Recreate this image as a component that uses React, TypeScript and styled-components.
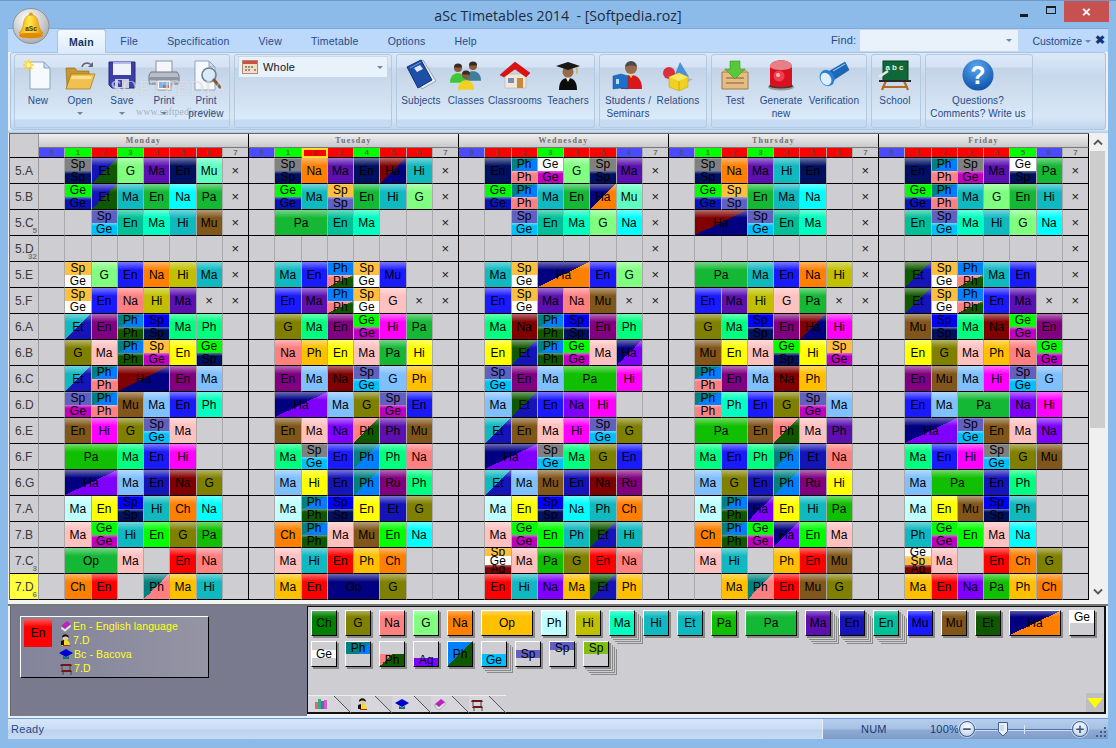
import React from 'react'
import styled, { createGlobalStyle } from 'styled-components'

const COLORS: Record<string, string> = {
  gy: '#808080', nv: '#001060', na: '#000080', dg: '#105800', bl: '#1414b8', b2: '#1a1aff', b3: '#0000ff',
  lg: '#80ff80', pu: '#5c10b0', mi: '#60ffc0', gr: '#00ff00', gb: '#0814b8', te: '#10b8c0', gn: '#14b834',
  cy: '#00ffff', sp: '#6060c0', sk: '#00c0ff', em: '#00c098', aq: '#00ffc0', br: '#80561a', or: '#ff8000',
  ol: '#c0c000', wh: '#ffffff', ye: '#ffc040', am: '#ffc000', pk: '#ff8080', lp: '#ffc0c0', ph: '#0080ff',
  tl: '#008080', mg: '#c000c0', pr: '#800080', ma: '#ff00ff', sg: '#00ff80', ms: '#10c000', re: '#ff0000',
  mr: '#800000', lb: '#80c0ff', oa: '#808000', ib: '#c0ffff', yl: '#ffff00', vi: '#8000ff', ch: '#008000',
  lm: '#80c010',
}

const DAYS = ['Monday', 'Tuesday', 'Wednesday', 'Thursday', 'Friday']

// b = blue, g = green, r = red, s = selected, n = grey
const PERIODS = ['bgrgrrrn', 'bgsrgrrn', 'brrgrrbn', 'bgrgrrrn', 'brrrrgbn']

// one string per day: 8 periods, "." empty, "x" closed, a/b split, c-d diagonal, *n span
const ROWS: { name: string; badge?: string; mark?: boolean; days: string[] }[] = [
  { name: '5.A', days: [
    '. Sp:gy/Sp:nv Et:bl-dg G:lg Ma:pu En:nv Mu:mi x',
    '. Sp:gy/Sp:nv Na:or Ma:pu En:nv Ha:mr-na Hi:te x',
    '. En:nv Ph:tl-ph/Ph:pk Ge:wh/Ge:mg G:lg Sp:gy/Sp:nv Ma:pu x',
    '. Sp:gy/Sp:nv Na:or Ma:pu Hi:te En:nv . x',
    '. En:nv Ph:tl-ph/Ph:pk Sp:gy/Ge:mg Ma:pu Ge:wh/Sp:nv Pa:gn x',
  ] },
  { name: '5.B', days: [
    '. Ge:gr/Ge:gb Et:bl-dg Ma:te En:gn Na:cy Pa:gn x',
    '. Ge:gr/Ge:gb Ma:te Sp:ye/Sp:sp En:gn Hi:te G:lg x',
    '. Ge:gr/Ge:gb Ph:tl-ph/Ph:pk Ma:te En:gn Ha:na-or Mu:mi x',
    '. Ge:gr/Ge:gb Sp:ye/Sp:sp En:gn Ma:te Na:cy . x',
    '. Ge:gr/Ge:gb Ph:tl-ph/Ph:pk Ma:te G:lg En:gn Hi:te x',
  ] },
  { name: '5.C', badge: '5', days: [
    '. . Sp:sp/Ge:sk En:em Ma:aq Hi:te Mu:br x',
    '. Pa:gn*2 En:em Ma:aq . . x',
    '. . Sp:sp/Ge:sk En:em Ma:aq G:lg Na:cy x',
    '. Ha:mr-na*2 Sp:sp/Ge:sk En:em Ma:aq . x',
    '. En:em Sp:sp/Ge:sk Ma:aq Hi:te G:lg Na:cy x',
  ] },
  { name: '5.D', badge: '32', days: [
    '. . . . . . . x', '. . . . . . . x', '. . . . . . . x', '. . . . . . . x', '. . . . . . . x',
  ] },
  { name: '5.E', days: [
    '. Sp:ye/Ge:wh G:lg En:b2 Na:or Hi:ol Ma:te x',
    '. Ma:te En:b2 Ph:ph/Ph:pk-dg Sp:ye/Ge:wh Mu:b2 . x',
    '. Ma:te Sp:ye/Ge:wh Ha:na-or*2 En:b2 G:lg x',
    '. Pa:gn*2 Ma:te En:b2 Na:or Hi:ol x',
    '. Et:dg-bl Sp:ye/Ge:wh Ph:ph/Ph:pk-dg Ma:te En:b2 . x',
  ] },
  { name: '5.F', days: [
    '. Sp:ye/Ge:wh En:b2 Na:pk Hi:ol Ma:pu x x',
    '. En:b2 Ma:pu Ph:ph/Ph:pk-dg Sp:ye/Ge:wh G:lp x x',
    '. En:b2 Sp:ye/Ge:wh Ma:pu Na:pk Mu:br x x',
    '. En:b2 Ma:pu Hi:ol G:lp Pa:gn x x',
    '. Et:dg-bl Sp:ye/Ge:wh Ph:ph/Ph:pk-dg En:b2 Ma:pu x x',
  ] },
  { name: '6.A', days: [
    '. Et:te-bl En:pr Ph:tl-ph/Ph:dg Sp:b3/Sp:nv Ma:sg Ph:sg .',
    '. G:oa Ma:sg En:pr Ge:gr/Ge:mg Hi:ma Pa:gn .',
    '. Ma:sg Na:mr Ph:tl-ph/Ph:dg Sp:b3/Sp:nv En:pr Ph:sg .',
    '. G:oa Ma:sg Sp:b3/Sp:nv En:pr Ha:mr-na Hi:ma .',
    '. Mu:br Sp:b3/Sp:nv Ma:sg Na:mr Ge:gr/Ge:mg En:pr .',
  ] },
  { name: '6.B', days: [
    '. G:oa Ma:lp Ph:tl-ph/Ph:dg Sp:ye/Ge:mg En:yl Ge:gr/Sp:nv .',
    '. Na:pk Ph:am En:yl Ma:lp Pa:gn Hi:yl .',
    '. En:yl Et:dg-bl Ph:tl-ph/Ph:dg Ge:gr/Ge:mg Ma:lp Ha:na-vi .',
    '. Mu:br En:yl Ma:lp Ge:gr/Sp:nv Hi:yl Sp:ye/Ge:mg .',
    '. En:yl G:oa Ma:lp Ph:am Na:pk Ge:gr/Ge:mg .',
  ] },
  { name: '6.C', days: [
    '. Et:te-bl Ph:tl-ph/Ph:pk Ha:mr-na*2 En:pr Ma:lb .',
    '. En:pr Ma:lb Na:mr Sp:sp/Ge:sk G:lb Ph:am .',
    '. Sp:sp/Ge:sk En:pr Ma:lb Pa:ms*2 Hi:ma .',
    '. Ph:tl-ph/Ph:pk En:pr Ma:lb Na:mr Ph:am . .',
    '. En:pr Mu:br Ma:lb Hi:ma Sp:sp/Ge:sk G:lb .',
  ] },
  { name: '6.D', days: [
    '. Sp:sp/Ge:mg Ph:tl-ph/Ph:pk Mu:br Ma:lb En:b2 Ph:aq .',
    '. Ha:na-vi*2 Ma:lb G:oa Sp:sp/Ge:mg En:b2 .',
    '. Ma:lb Et:dg-bl En:b2 Na:vi Hi:ma . .',
    '. Ph:tl-ph/Ph:pk Ph:aq En:b2 G:oa Sp:sp/Ge:mg Ma:lb .',
    '. En:b2 Ma:lb Pa:gn*2 Na:vi Hi:ma .',
  ] },
  { name: '6.E', days: [
    '. En:br Hi:ma G:oa Sp:sp/Ge:sk Ma:lp . .',
    '. En:br Ma:lp Na:vi Ph:pk-dg Ph:pu Mu:br .',
    '. Et:te-bl En:br Ma:lp Hi:ma Sp:sp/Ge:sk G:oa .',
    '. Pa:ms*2 En:br Ph:pk-dg Ma:lp Ph:pu .',
    '. Ha:na-vi*2 Sp:sp/Ge:sk En:br Ma:lp Na:vi .',
  ] },
  { name: '6.F', days: [
    '. Pa:ms*2 Ma:sg En:b2 Hi:ma . .',
    '. Ma:sg Sp:gy/Ge:sk En:b2 Ph:tl-ph Ph:sg Na:pk .',
    '. Ha:na-vi*2 Sp:gy/Ge:sk Ma:sg G:oa En:b2 .',
    '. Ma:sg En:b2 Ph:sg Ph:tl-ph Et:bl Na:pk .',
    '. Ma:sg En:b2 Hi:ma Sp:gy/Ge:sk G:oa Mu:br .',
  ] },
  { name: '6.G', days: [
    '. Ha:na-vi*2 Ma:lb En:bl Na:mr G:oa .',
    '. Ma:lb Hi:yl En:bl Ph:tl-ph Ru:pr Ph:sg .',
    '. Et:te-bl Ma:lb Mu:br En:bl Na:mr Ru:pr .',
    '. Ma:lb G:oa En:bl Ph:tl-ph Ru:pr Hi:yl .',
    '. Ma:lb Pa:ms*2 En:bl Ph:sg . .',
  ] },
  { name: '7.A', days: [
    '. Ma:ib En:yl Sp:b3/Sp:nv Hi:te Ch:or Na:cy .',
    '. Ma:ib Ph:tl-ph/Ph:dg Sp:b3/Sp:nv En:yl Et:bl G:oa .',
    '. Ma:ib En:yl Sp:b3/Sp:nv Na:cy Ph:te Ch:or .',
    '. Ma:ib Ph:tl-ph/Ph:dg Ha:na-vi En:yl Hi:te Pa:ms .',
    '. Ma:ib En:yl Mu:br Sp:b3/Sp:nv Ph:te . .',
  ] },
  { name: '7.B', days: [
    '. Ma:lp Ge:gr/Ge:mg Hi:te En:gr G:oa Pa:ms .',
    '. Ch:or Ph:tl-ph/Ph:dg Ma:lp Mu:br En:gr Na:cy .',
    '. Ma:lp Ge:gr/Ge:mg En:gr Ph:te Et:dg-bl Hi:te .',
    '. Ch:or Ph:tl-ph/Ph:dg Ge:gr/Ge:mg Ha:na-vi En:gr Ma:lp .',
    '. Ph:te Ge:gr/Ge:mg En:gr Ma:lp Na:cy . .',
  ] },
  { name: '7.C', badge: '3', days: [
    '. Op:gn*2 Ma:lp . En:re Na:pk .',
    '. Ma:lp Hi:te En:re Ph:am Ch:or . .',
    '. Sp:ye/Ge:wh/Ag:mr Ma:lp Pa:ms G:oa En:re Na:pk .',
    '. Ma:lp Hi:te . Ph:am En:re Mu:br .',
    '. Ge:wh/Sp:ye/Ag:mr Ma:lp . En:re Ch:or G:oa .',
  ] },
  { name: '7.D', badge: '6', mark: true, days: [
    '. Ch:or En:re . Ph:tl-pk Ma:am Hi:te .',
    '. Ma:am En:re Op:na*2 G:oa . .',
    '. En:re Hi:te Na:vi Ma:am Et:dg-bl Ph:am .',
    '. . Ma:am Ph:tl-pk En:re Mu:br G:oa .',
    '. Ma:am En:re Na:vi Pa:ms Ph:am Ch:or .',
  ] },
]

const swatch = (a: string, b?: string) => {
  const first = COLORS[a]
  return b ? `linear-gradient(to bottom right, ${first} 50%, ${COLORS[b]} 50%)` : first
}

const splitBand = (color: string, from: number, to: number) =>
  `linear-gradient(#cecdd1 ${from}%, ${color} ${from}%, ${color} ${to}%, #cecdd1 ${to}%)`

// the tray below the timetable
const CARDS: { label: string; bg: string; wide?: boolean; stack?: number; align?: string; flat?: boolean }[] = [
  { label: 'Ch', bg: swatch('ch') },
  { label: 'G', bg: swatch('oa') },
  { label: 'Na', bg: swatch('pk') },
  { label: 'G', bg: swatch('lg') },
  { label: 'Na', bg: swatch('or') },
  { label: 'Op', bg: swatch('am'), wide: true },
  { label: 'Ph', bg: swatch('ib') },
  { label: 'Hi', bg: swatch('ol') },
  { label: 'Ma', bg: swatch('aq'), stack: 3 },
  { label: 'Hi', bg: swatch('te') },
  { label: 'Et', bg: swatch('te') },
  { label: 'Pa', bg: swatch('ms') },
  { label: 'Pa', bg: swatch('gn'), wide: true },
  { label: 'Ma', bg: swatch('pu'), stack: 3 },
  { label: 'En', bg: swatch('bl'), stack: 3 },
  { label: 'En', bg: swatch('em'), stack: 3 },
  { label: 'Mu', bg: swatch('b2') },
  { label: 'Mu', bg: swatch('br') },
  { label: 'Et', bg: swatch('dg') },
  { label: 'Ha', bg: swatch('na', 'or'), wide: true },
  { label: 'Ge', bg: splitBand('#ffffff', 0, 50), align: 'flex-start', flat: true },
  { label: 'Ge', bg: splitBand('#ffffff', 33, 66), flat: true },
  { label: 'Ph', bg: `linear-gradient(#0000 50%, #cecdd1 50%), ${swatch('tl', 'ph')}`, align: 'flex-start', flat: true },
  { label: 'Ph', bg: `linear-gradient(#cecdd1 50%, #0000 50%), ${swatch('pk', 'dg')}`, align: 'flex-end', flat: true },
  { label: 'Ag', bg: splitBand('#8000ff', 66, 100), align: 'flex-end', flat: true },
  { label: 'Ph', bg: swatch('ph', 'dg'), flat: true },
  { label: 'Ge', bg: splitBand('#00c0ff', 50, 100), align: 'flex-end', stack: 2, flat: true },
  { label: 'Sp', bg: splitBand('#6060c0', 33, 66), flat: true },
  { label: 'Sp', bg: splitBand('#6060c0', 0, 33), align: 'flex-start', flat: true },
  { label: 'Sp', bg: splitBand('#80c010', 0, 50), align: 'flex-start', stack: 3, flat: true },
]

const GlobalStyle = createGlobalStyle`
  html, body { margin: 0; padding: 0; background: #8dbbe9; }
  body { font-family: "Liberation Sans", Arial, sans-serif; overflow: hidden; }
  * { box-sizing: border-box; }
`

const Win = styled.div`
  width: 1116px;
  height: 748px;
  display: flex;
  flex-direction: column;
  overflow: hidden;
  position: relative;
  background: #8dbbe9;
  border-top: 1px solid #6d97c4;
`
const TitleBar = styled.div`
  height: 27px;
  display: grid;
  grid-template-columns: 1fr auto 1fr;
  align-items: center;
`
const Title = styled.div`
  grid-column: 2;
  font-family: "Open Sans", sans-serif;
  font-size: 14.2px;
  color: #1c2c3c;
  white-space: pre;
  padding-top: 1px;
`
const Controls = styled.div`
  grid-column: 3;
  justify-self: end;
  display: flex;
  align-items: center;
  height: 27px;
  padding: 0 7px 6px 0;
`
const CtlMin = styled.div`
  width: 8px;
  height: 3px;
  background: #1c1c1c;
  margin: 8px 18px 0 0;
`
const CtlMax = styled.div`
  width: 10px;
  height: 8px;
  border: 1px solid #1c1c1c;
  border-top-width: 2px;
  margin: 0 8px 4px 0;
`
const CtlClose = styled.div`
  width: 45px;
  height: 21px;
  background: #c75050;
  color: #fff;
  display: flex;
  align-items: center;
  justify-content: center;
  font-size: 15px;
  font-weight: bold;
`
const Logo = styled.div`
  position: absolute;
  left: 12px;
  top: 7px;
  width: 38px;
  height: 36px;
  z-index: 3;
`
const Client = styled.div`
  flex: 1;
  margin: 0 8px 9px;
  display: flex;
  flex-direction: column;
  background: #f0f0f0;
`
const TabBar = styled.div`
  height: 24px;
  display: flex;
  background: #bcd8fb;
  padding-left: 49px;
  border-top: 1px solid #7da8d8;
  position: relative;
  z-index: 1;
`
const Tab = styled.div<{ $active?: boolean }>`
  height: ${(p) => (p.$active ? '24px' : '23px')};
  padding: 0 ${(p) => (p.$active ? '11px' : '14.5px')};
  display: flex;
  align-items: center;
  font-size: 10.5px;
  letter-spacing: 0.22px;
  font-weight: ${(p) => (p.$active ? 'bold' : 'normal')};
  color: ${(p) => (p.$active ? '#15335f' : '#274a87')};
  ${(p) =>
    p.$active &&
    `background: linear-gradient(#f4f9ff, #dcebfb);
     border: 1px solid #a5c4e6;
     border-bottom: none;
     border-radius: 3px 3px 0 0;`}
`
const FindBox = styled.div`
  margin-left: auto;
  display: flex;
  align-items: flex-start;
  padding-right: 3px;
`
const FindLabel = styled.div`
  font-size: 11px;
  letter-spacing: 0.2px;
  color: #274a87;
  margin: 5px 3px 0 0;
`
const FindInput = styled.div`
  width: 160px;
  height: 23px;
  background: #e9f1fb;
  border: 1px solid #c6d8ec;
  display: flex;
  align-items: center;
  justify-content: flex-end;
  padding-right: 6px;
`
const Caret = styled.span`
  display: inline-block;
  width: 0;
  height: 0;
  border-left: 3px solid transparent;
  border-right: 3px solid transparent;
  border-top: 3px solid #6c87a8;
`
const SinkMark = styled.span`
  display: inline-block;
  width: 0;
  height: 0;
  border-left: 8px solid transparent;
  border-right: 8px solid transparent;
  border-top: 10px solid #ffff00;
`
const Customize = styled.div`
  font-size: 10.5px;
  color: #274a87;
  margin: 6px 0 0 13px;
  display: flex;
  align-items: center;
  gap: 3px;
`
const CloseX = styled.div`
  font-size: 12px;
  font-weight: bold;
  color: #15337a;
  margin: 2px 0 0 4px;
  line-height: 18px;
`
const Ribbon = styled.div`
  height: 78px;
  margin: 0 2px;
  display: flex;
  gap: 4px;
  padding: 2px 3px;
  background: linear-gradient(#dbe8f8, #c7d8ec 24px, #d8e7f7 64px, #bfd5ee);
  border-radius: 3px;
  border: 1px solid #a9c3e0;
  position: relative;
`
const Group = styled.div<{ $w: number; $pad?: number }>`
  width: ${(p) => p.$w}px;
  height: 74px;
  margin-top: -1px;
  padding-left: ${(p) => p.$pad ?? 0}px;
  display: flex;
  align-items: flex-start;
  border: 1px solid #b3c9e0;
  border-radius: 3px;
  background: linear-gradient(#dde9f8 0, #d4e2f3 12px, #c3d3e7 13px, #d0dff0 40px, #dcebfa 64px, #c5dbf3 65px);
`
const RibbonBtn = styled.div<{ $w: number }>`
  width: ${(p) => p.$w}px;
  flex: none;
  display: flex;
  flex-direction: column;
  align-items: center;
  padding-top: 4px;
  color: #274a87;
`
const IconBox = styled.div`
  height: 32px;
  display: flex;
  align-items: center;
  justify-content: center;
  margin-bottom: 3px;
`
const BtnLabel = styled.div`
  font-size: 10px;
  letter-spacing: 0.12px;
  line-height: 13px;
  text-align: center;
  white-space: nowrap;
  min-height: 13px;
  display: flex;
  align-items: center;
  justify-content: center;
`
const WholeSelect = styled.div`
  width: 150px;
  height: 22px;
  margin: 1px 0 0 3px;
  background: #e9f1fb;
  border: 1px solid #c6d8ec;
  display: flex;
  align-items: center;
  padding: 0 4px 0 3px;
  gap: 5px;
  font-size: 11px;
  letter-spacing: 0.2px;
  color: #111;
`
const Grow = styled.div`
  flex: 1;
`
const Watermark = styled.div`
  position: absolute;
  left: 90px;
  top: 24px;
  pointer-events: none;
  color: rgba(255, 255, 255, 0.55);
  font-family: "Liberation Serif", serif;
  text-align: center;
  width: 136px;
`
const WmBig = styled.div`
  font-size: 21px;
  letter-spacing: 0.5px;
  line-height: 22px;
  text-shadow: 0 0 1px rgba(120, 130, 150, 0.4);
`
const WmSmall = styled.div`
  font-size: 10px;
  line-height: 14px;
  margin-top: 6px;
  padding-left: 14px;
  color: rgba(90, 100, 120, 0.45);
`
const Strip = styled.div`
  height: 3px;
  background: linear-gradient(#d6e5f6, #afc8e6);
`
const MainRow = styled.div`
  display: flex;
  padding-left: 1px;
  height: 467px;
`
const Timetable = styled.div`
  width: 1080px;
  height: 467px;
  display: grid;
  grid-template-columns: 29px repeat(40, 26.25px);
  grid-template-rows: 14px 10px repeat(17, 26px);
  background: #cecdd1;
  border-top: 1px solid #666;
  border-left: 1px solid #666;
`
const Corner = styled.div`
  grid-row: span 2;
  border-right: 1px solid #999;
  border-bottom: 1px solid #000;
`
const DayHead = styled.div`
  grid-column: span 8;
  display: flex;
  align-items: center;
  justify-content: center;
  background: linear-gradient(#efefef, #c9c9cc);
  border-right: 1px solid #000;
  border-bottom: 1px solid #777;
  font-family: "Liberation Serif", serif;
  font-size: 8px;
  font-weight: bold;
  letter-spacing: 1.2px;
  color: #707070;
`
const CHIP: Record<string, string> = { b: '#4a4aff', g: '#00ff00', r: '#ff0000', s: '#ff0000', n: '#cecdd1' }
const Chip = styled.div<{ $kind: string; $end: boolean }>`
  background: ${(p) => CHIP[p.$kind]};
  border-right: 1px solid ${(p) => (p.$end ? '#000' : '#aaa')};
  border-bottom: 1px solid #000;
  ${(p) => p.$kind === 's' && 'outline: 2px solid #ffe020; outline-offset: -2px;'}
  font-size: 8px;
  font-weight: bold;
  line-height: 9px;
  text-align: center;
  color: rgba(70, 80, 70, 0.75);
`
const ClassCell = styled.div<{ $mark?: boolean }>`
  position: relative;
  background: ${(p) => (p.$mark ? '#ffff40' : 'transparent')};
  border-right: 1px solid #999;
  border-bottom: 1px solid #000;
  display: flex;
  align-items: center;
  padding-left: 5px;
  font-size: 12px;
  color: #3a3a3a;
`
const Badge = styled.span`
  position: absolute;
  right: 1px;
  bottom: 0;
  font-size: 8px;
  font-weight: bold;
  line-height: 9px;
  color: #777;
`
const Cell = styled.div<{ $span: number; $end: boolean }>`
  grid-column: span ${(p) => p.$span};
  border-right: 1px solid ${(p) => (p.$end ? '#000' : '#aaa')};
  border-bottom: 1px solid #000;
  display: flex;
  flex-direction: column;
  min-width: 0;
  min-height: 0;
`
const Part = styled.div<{ $bg: string; $glow: number }>`
  flex: 1;
  min-height: 0;
  display: flex;
  align-items: center;
  justify-content: center;
  line-height: 1;
  font-size: 12px;
  color: #000;
  background: linear-gradient(rgba(255, 255, 255, 0.42), rgba(255, 255, 255, 0) ${(p) => p.$glow}px), ${(p) => p.$bg};
`
const Cross = styled.div`
  flex: 1;
  display: flex;
  align-items: center;
  justify-content: center;
  font-size: 13px;
  color: #222;
  padding-bottom: 1px;
`
const Scroll = styled.div`
  width: 17px;
  background: #f0f0f0;
  display: flex;
  flex-direction: column;
  align-items: center;
  height: 467px;
`
const ScrollBtn = styled.div`
  height: 18px;
  display: flex;
  align-items: center;
  justify-content: center;
  flex: none;
`
const Thumb = styled.div`
  width: 15px;
  height: 277px;
  background: #cdcdcd;
`
const Gap = styled.div`
  background: #f4f4f4;
  border-bottom: 2px solid #777;
  height: 6px;
`
const Tray = styled.div`
  height: 110px;
  margin-left: 2px;
  width: 1096px;
  display: flex;
`
const Slate = styled.div`
  width: 297px;
  background: #7a7a8e;
  padding: 10px 0 0 9px;
  border-left: 1px solid #666;
`
const Legend = styled.div`
  width: 189px;
  height: 62px;
  border: 1px solid #000;
  border-top-color: #fff;
  border-left-color: #fff;
  background: linear-gradient(to right, #83839a, #9494a4);
  display: flex;
  gap: 7px;
  padding: 2px 3px;
`
const LegendSwatch = styled.div`
  width: 28px;
  height: 28px;
  background: linear-gradient(rgba(255, 255, 255, 0.35), rgba(255, 255, 255, 0) 8px), #ff0000;
  display: flex;
  align-items: center;
  justify-content: center;
  font-size: 12px;
  color: #000;
`
const LegendLines = styled.div`
  display: flex;
  flex-direction: column;
`
const LegendLine = styled.div`
  height: 15px;
  display: flex;
  align-items: center;
  font-size: 10.5px;
  letter-spacing: 0.1px;
  color: #ffff20;
  white-space: pre;
  svg {
    margin-right: -2px;
  }
`
const CardBox = styled.div`
  flex: 1;
  height: 108px;
  background: #cecdd1;
  border: 1px solid #111;
  border-right-width: 2px;
  border-bottom-width: 2px;
  display: flex;
  flex-direction: column;
  position: relative;
`
const CardList = styled.div`
  flex: 1;
  display: flex;
  flex-wrap: wrap;
  align-content: flex-start;
  column-gap: 8px;
  row-gap: 5px;
  padding: 3px;
`
const stackShadow = (n: number) => {
  const out = ['2px 2px 0 #8a8a8a']
  for (let i = 1; i <= n; i++) {
    out.push(`${2 * i + 1}px ${2 * i + 1}px 0 #cecdd1`, `${2 * i + 2}px ${2 * i + 2}px 0 #8a8a8a`)
  }
  return out.join(',')
}
const Card = styled.div<{ $bg: string; $wide?: boolean; $stack?: number; $align?: string; $flat?: boolean }>`
  width: ${(p) => (p.$wide ? 52 : 26)}px;
  height: 26px;
  border: 1px solid #000;
  border-top-color: #fff;
  border-left-color: #fff;
  box-shadow: ${(p) => stackShadow(p.$stack ?? 0)};
  background: ${(p) =>
    p.$flat ? p.$bg : `linear-gradient(rgba(255, 255, 255, 0.35), rgba(255, 255, 255, 0) 6px), ${p.$bg}`};
  display: flex;
  justify-content: center;
  align-items: ${(p) => p.$align ?? 'center'};
  font-size: 12px;
  line-height: 1;
  color: #000;
`
const TabStrip = styled.div`
  height: 17px;
  display: flex;
  flex: none;
`
const StripTab = styled.div<{ $w: number }>`
  width: ${(p) => p.$w}px;
  height: 17px;
  flex: none;
  position: relative;
  display: flex;
  align-items: center;
  padding-left: ${(p) => p.$w - 36}px;
  background: #d6d6dc;
  border-top: 1px solid #eee;
  &::after {
    content: '';
    position: absolute;
    right: 0;
    top: 0;
    width: 17px;
    height: 17px;
    background: linear-gradient(to top right, #0000 48%, #555 48%, #555 52%, #cecdd1 52%);
  }
`
const Sink = styled.div`
  position: absolute;
  right: 0;
  bottom: 0;
  width: 18px;
  height: 19px;
  background: #bdbdc4;
  display: flex;
  align-items: center;
  justify-content: center;
`
const Sep = styled.div`
  height: 3px;
  background: #e6eef8;
  border-bottom: 1px solid #6f9bd0;
`
const Status = styled.div`
  height: 20px;
  display: flex;
`
const StatusLeft = styled.div`
  width: 814px;
  display: flex;
  align-items: center;
  padding-left: 3px;
  font-size: 11px;
  letter-spacing: 0.3px;
  color: #274a87;
  background: linear-gradient(#d6e6fa, #c8dcf5 50%, #bcd2ee 55%, #c8daf1);
`
const StatusRight = styled.div`
  flex: 1;
  display: flex;
  align-items: center;
  font-size: 11px;
  letter-spacing: 0.2px;
  color: #1c3a74;
  background: linear-gradient(#b7cfee, #a5bfe3 50%, #8eaad4 55%, #7f9dc9);
  border-left: 1px solid #e8f0fa;
`
const StatusText = styled.div<{ $left: number; $w: number }>`
  margin-left: ${(p) => p.$left}px;
  width: ${(p) => p.$w}px;
  white-space: nowrap;
`
const ZoomBtn = styled.div`
  width: 16px;
  height: 16px;
  flex: none;
  border-radius: 50%;
  border: 1px solid #3f5f8f;
  background: radial-gradient(circle at 50% 35%, #fff, #b6c9e4);
  display: flex;
  align-items: center;
  justify-content: center;
  font-size: 15px;
  font-weight: bold;
  line-height: 14px;
  color: #3a5a8a;
  box-shadow: 0 0 0 1px rgba(255, 255, 255, 0.5);
`
const Slider = styled.div`
  width: 97px;
  height: 1px;
  flex: none;
  background: #4f6f9f;
  position: relative;
  box-shadow: 0 1px 0 #cfe0f5;
`
const SliderTick = styled.div`
  position: absolute;
  left: 49px;
  top: -4px;
  width: 1px;
  height: 9px;
  background: #dce8f6;
`
const SliderThumb = styled.div`
  position: absolute;
  left: 23px;
  top: -7px;
`
const Grip = styled.div`
  margin-left: 8px;
  align-self: flex-end;
  padding-bottom: 2px;
  display: flex;
`

const Bell = () => (
  <svg width="38" height="36" viewBox="0 0 38 36">
    <defs>
      <radialGradient id="bellRim" cx="40%" cy="30%" r="75%">
        <stop offset="0" stopColor="#ffffff" />
        <stop offset="1" stopColor="#a9a9a9" />
      </radialGradient>
      <linearGradient id="bellBody" x1="0" y1="0" x2="1" y2="0">
        <stop offset="0" stopColor="#f8a800" />
        <stop offset=".45" stopColor="#ffe84a" />
        <stop offset="1" stopColor="#e88a00" />
      </linearGradient>
    </defs>
    <ellipse cx="19" cy="18" rx="18" ry="17.5" fill="url(#bellRim)" stroke="#7a7a7a" strokeWidth=".7" />
    <circle cx="19" cy="6.5" r="2" fill="#e69a00" />
    <path d="M19 7c-5 0-7 4-7.5 9-.4 4-2.4 7-4.5 9 1 2.5 23 2.5 24 0-2.100-2-4.100-5-4.500-9-.5-5-2.500-9-7.500-9z" fill="url(#bellBody)" stroke="#c87800" strokeWidth=".5" />
    <ellipse cx="19" cy="27.500" rx="12" ry="2.800" fill="#e08a00" />
    <text x="19" y="23" fontSize="6.500" fontFamily="Liberation Sans" fontWeight="bold" fill="#4a2a00" textAnchor="middle">aSc</text>
  </svg>
)

const NewIcon = () => (
  <svg width="34" height="32" viewBox="0 0 34 32">
    <path d="M9 3h14l6 6v21H9z" fill="#f6fafe" stroke="#8ea3bf" />
    <path d="M23 3v6h6z" fill="#cfdbea" stroke="#8ea3bf" />
    <g stroke="#ffd21f" strokeWidth="1.500">
      <path d="M2 6h11M7.500.5v11M3.500 2l8 8M11.500 2l-8 8" />
    </g>
    <circle cx="7.500" cy="6" r="2.200" fill="#fff6b0" />
  </svg>
)
const OpenIcon = () => (
  <svg width="34" height="32" viewBox="0 0 34 32">
    <path d="M3 9h9l2 3h12v4H8l-4 13z" fill="#c9962c" stroke="#8a6a20" strokeWidth=".6" />
    <path d="M8 15h24l-5 15H3z" fill="#f0c050" stroke="#9a7420" strokeWidth=".7" />
    <path d="M9 17h20l-1 3H8z" fill="#fbe08c" />
    <path d="M19 8c1-4 6-5 9-2.500" fill="none" stroke="#667" strokeWidth="1.600" />
    <path d="M30 3v5h-5z" fill="#667" />
  </svg>
)
const SaveIcon = () => (
  <svg width="34" height="32" viewBox="0 0 34 32">
    <path d="M4 3h26v26H7l-3-3z" fill="#3e3ea8" stroke="#26267a" />
    <rect x="8" y="3" width="18" height="13" fill="#eef2fa" />
    <rect x="8" y="3" width="18" height="2" fill="#b9b9e8" />
    <rect x="10" y="20" width="14" height="9" fill="#c9cfdd" />
    <rect x="13" y="21" width="4" height="7" fill="#3e3ea8" />
  </svg>
)
const PrintIcon = () => (
  <svg width="34" height="32" viewBox="0 0 34 32">
    <rect x="9" y="2" width="16" height="13" fill="#f4f6fa" stroke="#8a94a4" />
    <path d="M4 13h26l2 3v9H2v-9z" fill="#b7bcc6" stroke="#6e7682" />
    <rect x="2" y="18" width="30" height="3" fill="#8d95a2" />
    <rect x="10" y="21" width="14" height="10" fill="#fdfdff" stroke="#8a94a4" />
    <rect x="12" y="23" width="10" height="6" fill="#7fb2e6" />
    <rect x="16" y="26" width="6" height="3" fill="#c86a50" />
  </svg>
)
const PreviewIcon = () => (
  <svg width="34" height="32" viewBox="0 0 34 32">
    <path d="M6 2h14l6 6v23H6z" fill="#f6fafe" stroke="#8ea3bf" />
    <path d="M20 2v6h6z" fill="#cfdbea" stroke="#8ea3bf" />
    <circle cx="20" cy="16" r="7" fill="#d2e6f6" fillOpacity=".8" stroke="#70808f" strokeWidth="1.600" />
    <path d="M25 21l6 7" stroke="#7a5a3a" strokeWidth="3" strokeLinecap="round" />
  </svg>
)
const SubjectsIcon = () => (
  <svg width="34" height="32" viewBox="0 0 34 32">
    <path d="M4 9L19 1l13 21-14 8z" fill="#e9edf3" stroke="#9aa4b2" />
    <path d="M3 8L17 1l11 20-14 8z" fill="#1d4fa8" stroke="#11316e" />
    <path d="M6 9l11-6" stroke="#6f9be0" strokeWidth="1" />
    <path d="M10 9l6-3 3 4-6 3z" fill="#dde7f6" />
  </svg>
)
const Head = ({ x, y, shirt, r = 4 }: { x: number; y: number; shirt: string; r?: number }) => (
  <g>
    <path d={`M${x - r * 2} ${y + r * 3.700}c0-${r * 1.800} ${r}-${r * 2.400} ${r * 2}-${r * 2.400}s${r * 2} ${r * 0.600} ${r * 2} ${r * 2.400}z`} fill={shirt} />
    <circle cx={x} cy={y} r={r} fill="#8a5a3c" />
    <path d={`M${x - r} ${y - 0.500}a${r} ${r} 0 0 1 ${r * 2} 0z`} fill="#3a2a22" />
  </g>
)
const ClassesIcon = () => (
  <svg width="34" height="32" viewBox="0 0 34 32">
    <Head x={24} y={7} shirt="#3f7f9a" />
    <Head x={9} y={9} shirt="#3cc838" />
    <Head x={17} y={16} shirt="#f0d020" />
  </svg>
)
const HouseIcon = () => (
  <svg width="34" height="32" viewBox="0 0 34 32">
    <path d="M7 15h21v14H7z" fill="#f0e7d8" stroke="#b3a78f" strokeWidth=".5" />
    <path d="M2 16L17 3l15 11-4 4-11-8-11 8z" fill="#e01010" stroke="#9a0808" strokeWidth=".5" />
    <rect x="19" y="19" width="6" height="10" fill="#c88a3a" />
    <rect x="10" y="19" width="6" height="5" fill="#7a8fb0" />
  </svg>
)
const TeacherIcon = () => (
  <svg width="34" height="32" viewBox="0 0 34 32">
    <path d="M8 31c0-8 3-12 9-12s9 4 9 12z" fill="#0c0c0c" />
    <path d="M15 19h4l-2 4z" fill="#eee" />
    <circle cx="17" cy="13" r="5.500" fill="#9a6a48" />
    <path d="M5 7l12-4 12 4-12 4z" fill="#181818" />
    <path d="M26 8v7" stroke="#c8a020" strokeWidth="1" />
  </svg>
)
const StudentIcon = () => (
  <svg width="34" height="32" viewBox="0 0 34 32">
    <path d="M10 30c0-10 4-14 10-14s11 4 11 14z" fill="#d81818" />
    <circle cx="20" cy="9" r="6" fill="#9a6a48" />
    <path d="M14 8a6 6 0 0 1 12 0c-3-2-8-2-12 0z" fill="#4a4a4a" />
    <path d="M18 16h4l-2 3z" fill="#f0d020" />
    <path d="M2 17l8-2 7 2v13l-7-1-8 1z" fill="#1c70c8" stroke="#104a90" strokeWidth=".5" />
    <path d="M5 20h3v5H5z" fill="#bcdcf6" />
  </svg>
)
const RelationsIcon = () => (
  <svg width="34" height="32" viewBox="0 0 34 32">
    <path d="M19 3l9 15H13z" fill="#4a90d8" />
    <path d="M22 18l10 2-6 4z" fill="#9aa4b0" opacity=".6" />
    <circle cx="8" cy="14" r="6" fill="#d83040" />
    <path d="M8 18l10-4 9 4v10l-9 4-10-4z" fill="#f0d020" stroke="#b89c10" strokeWidth=".5" />
    <path d="M8 18l10 4 9-4-9-4z" fill="#fbe860" />
    <path d="M18 22v10" stroke="#b89c10" strokeWidth=".6" />
  </svg>
)
const TestIcon = () => (
  <svg width="34" height="32" viewBox="0 0 34 32">
    <path d="M4 13h26v17H4z" fill="#e4bc84" stroke="#a07a48" />
    <path d="M4 13l3-3h20l3 3z" fill="#cfa468" />
    <path d="M8 18h18v2H8zM8 23h18v2H8z" fill="#b58d58" />
    <path d="M12 2h10v8h5L17 20 7 10h5z" fill="#58c83a" stroke="#3a9624" strokeWidth=".6" />
  </svg>
)
const SirenIcon = () => (
  <svg width="34" height="32" viewBox="0 0 34 32">
    <ellipse cx="17" cy="28" rx="13" ry="3.500" fill="#9a9a9a" />
    <ellipse cx="17" cy="27" rx="12" ry="2.500" fill="#3a3a3a" />
    <path d="M6 8c0-9 22-9 22 0v18c-4 3-18 3-22 0z" fill="#d81020" />
    <path d="M6 8c0-9 22-9 22 0-3 4-19 4-22 0z" fill="#e88088" />
    <circle cx="15" cy="17" r="5.500" fill="#f04050" />
    <circle cx="14" cy="16" r="2" fill="#ffc0c8" />
  </svg>
)
const TorchIcon = () => (
  <svg width="34" height="32" viewBox="0 0 34 32">
    <path d="M11 13l17-10 4 8-17 11z" fill="#1c68b8" stroke="#0f4486" strokeWidth=".5" />
    <ellipse cx="10" cy="19" rx="7" ry="8.500" transform="rotate(-30 10 19)" fill="#2a80d0" />
    <ellipse cx="9" cy="20" rx="5" ry="6.500" transform="rotate(-30 9 20)" fill="#dfeefc" />
    <path d="M16 12l12-7" stroke="#86c0f0" strokeWidth="1.200" />
  </svg>
)
const BoardIcon = () => (
  <svg width="34" height="32" viewBox="0 0 34 32">
    <path d="M8 22L4 31M26 22l4 9M4 28h26" stroke="#b86820" strokeWidth="2.200" fill="none" />
    <rect x="5" y="2" width="25" height="20" fill="#106838" stroke="#0a3c20" />
    <rect x="1" y="21" width="32" height="2" fill="#2a2a2a" />
    <text x="17.500" y="11" fontSize="8" fontWeight="bold" letterSpacing="2" fill="#e8f4e8" fontFamily="Liberation Sans" textAnchor="middle">abc</text>
    <path d="M1 18l9-6" stroke="#e8e8e8" strokeWidth="2.500" />
  </svg>
)
const HelpIcon = () => (
  <svg width="34" height="32" viewBox="0 0 34 32">
    <defs>
      <radialGradient id="helpFill" cx="45%" cy="25%" r="80%">
        <stop offset="0" stopColor="#5aa8f0" />
        <stop offset="1" stopColor="#0a4ea8" />
      </radialGradient>
    </defs>
    <circle cx="17" cy="16" r="15.500" fill="url(#helpFill)" />
    <text x="17" y="25" fontSize="25" fontWeight="bold" fill="#fff" fontFamily="Liberation Sans" textAnchor="middle">?</text>
  </svg>
)
const CalIcon = () => (
  <svg width="16" height="14" viewBox="0 0 16 14">
    <rect x=".5" y=".5" width="15" height="13" fill="#f0e0c8" stroke="#b08a70" />
    <rect x="1" y="1" width="14" height="3" fill="#d05040" />
    <path d="M3 6h2v2H3zM9 6h2v2H9z" fill="#60b060" />
    <path d="M6 6h2v2H6zM12 9h2v2h-2zM3 9h2v2H3z" fill="#e07070" />
    <path d="M6 9h2v2H6z" fill="#7090d0" />
  </svg>
)
const MiniBook = () => (
  <svg width="13" height="13" viewBox="0 0 13 13">
    <path d="M2 6l6-5 4 3-6 5z" fill="#c020c0" />
    <path d="M2 6v3l4 3 6-5V4L6 9z" fill="#e8e8f0" stroke="#777" strokeWidth=".5" />
  </svg>
)
const MiniStudent = () => (
  <svg width="13" height="14" viewBox="0 0 13 14">
    <path d="M3 13c0-4 2-6 4-6s4 2 4 6z" fill="#f0e020" />
    <circle cx="6.500" cy="4.500" r="3" fill="#e8c8a0" />
    <path d="M3 5c-.5-5 7-5 7 0-2-2-5-2-7 0z" fill="#111" />
    <path d="M2 8l3-1v5H2z" fill="#111" />
    <path d="M4 12h7v1H4z" fill="#c02020" />
  </svg>
)
const MiniCap = () => (
  <svg width="14" height="13" viewBox="0 0 14 13">
    <path d="M0 5l7-4 7 4-7 4z" fill="#0000d0" />
    <path d="M4 8v3h6V8L7 9.500z" fill="#107070" />
  </svg>
)
const MiniDesk = () => (
  <svg width="14" height="13" viewBox="0 0 14 13">
    <path d="M2 2h10l1 2H1zM3 8h9l1 2H2z" fill="#701818" />
    <path d="M3 4v4M11 4v4M4 10v3M12 10v3" stroke="#444" />
  </svg>
)
const MiniBars = () => (
  <svg width="12" height="12" viewBox="0 0 12 12">
    <rect x="0" y="4" width="3" height="7" fill="#e06080" />
    <rect x="3" y="1" width="3" height="10" fill="#30b070" />
    <rect x="6" y="3" width="3" height="8" fill="#6060d0" />
    <rect x="9" y="2" width="3" height="9" fill="#d060c0" />
  </svg>
)
const Chevron = ({ up }: { up?: boolean }) => (
  <svg width="10" height="7" viewBox="0 0 10 7">
    <path d={up ? 'M1 5.500L5 1.500l4 4' : 'M1 1.500l4 4 4-4'} fill="none" stroke="#555" strokeWidth="1.800" />
  </svg>
)
const SliderKnob = () => (
  <svg width="10" height="15" viewBox="0 0 10 15">
    <path d="M.5.500h9v9L5 14 .5 9.500z" fill="#e8f0fa" stroke="#3f5f8f" />
    <path d="M3 3v6M5 3v6" stroke="#b0c4dc" />
  </svg>
)
const GripIcon = () => (
  <svg width="11" height="11" viewBox="0 0 11 11">
    <path d="M8 1h2v2H8zM4 5h2v2H4zM8 5h2v2H8zM0 9h2v2H0zM4 9h2v2H4zM8 9h2v2H8z" fill="#3f5f8f" />
  </svg>
)

type Parsed = { span: number; kind: 'empty' | 'cross' | 'lesson'; parts: { label: string; bg: string }[] }

const parseToken = (token: string): Parsed => {
  if (token === '.') return { span: 1, kind: 'empty', parts: [] }
  if (token === 'x') return { span: 1, kind: 'cross', parts: [] }
  const [body, span] = token.split('*')
  const parts = body.split('/').map((item) => {
    const [label, color] = item.split(':')
    const [a, b] = color.split('-')
    return { label, bg: swatch(a, b) }
  })
  return { span: span ? Number(span) : 1, kind: 'lesson', parts }
}

const DayCells = ({ row, dayKey }: { row: string; dayKey: string }) => {
  let used = 0
  return (
    <>
      {row.split(' ').map((token, i) => {
        const cell = parseToken(token)
        used += cell.span
        return (
          <Cell key={`${dayKey}-${i}`} $span={cell.span} $end={used === 8}>
            {cell.kind === 'cross' && <Cross>×</Cross>}
            {cell.parts.map((part, j) => (
              <Part key={j} $bg={part.bg} $glow={cell.parts.length > 1 ? (j === 0 ? 1 : 3) : 8}>
                {part.label}
              </Part>
            ))}
          </Cell>
        )
      })}
    </>
  )
}

const Button = ({ w, icon, lines, caret }: { w: number; icon: React.ReactNode; lines: string[]; caret?: boolean }) => (
  <RibbonBtn $w={w}>
    <IconBox>{icon}</IconBox>
    {lines.map((line) => (
      <BtnLabel key={line}>{line}</BtnLabel>
    ))}
    {caret && (
      <BtnLabel>
        <Caret />
      </BtnLabel>
    )}
  </RibbonBtn>
)

const App: React.FC = () => {
  return (
    <Win>
      <GlobalStyle />
      <Logo>
        <Bell />
      </Logo>
      <TitleBar>
        <Title>aSc Timetables 2014  - [Softpedia.roz]</Title>
        <Controls>
          <CtlMin />
          <CtlMax />
          <CtlClose>×</CtlClose>
        </Controls>
      </TitleBar>
      <Client>
        <TabBar>
          <Tab $active>Main</Tab>
          <Tab>File</Tab>
          <Tab>Specification</Tab>
          <Tab>View</Tab>
          <Tab>Timetable</Tab>
          <Tab>Options</Tab>
          <Tab>Help</Tab>
          <FindBox>
            <FindLabel>Find:</FindLabel>
            <FindInput>
              <Caret />
            </FindInput>
            <Customize>
              Customize <Caret />
            </Customize>
            <CloseX>✖</CloseX>
          </FindBox>
        </TabBar>
        <Ribbon>
          <Group $w={216} $pad={2}>
            <Button w={42} icon={<NewIcon />} lines={['New']} />
            <Button w={42} icon={<OpenIcon />} lines={['Open']} caret />
            <Button w={42} icon={<SaveIcon />} lines={['Save']} caret />
            <Button w={42} icon={<PrintIcon />} lines={['Print']} caret />
            <Button w={42} icon={<PreviewIcon />} lines={['Print', 'preview']} />
          </Group>
          <Group $w={158}>
            <WholeSelect>
              <CalIcon />
              Whole
              <Grow />
              <Caret />
            </WholeSelect>
          </Group>
          <Group $w={199} $pad={2}>
            <Button w={44} icon={<SubjectsIcon />} lines={['Subjects']} />
            <Button w={46} icon={<ClassesIcon />} lines={['Classes']} />
            <Button w={52} icon={<HouseIcon />} lines={['Classrooms']} />
            <Button w={54} icon={<TeacherIcon />} lines={['Teachers']} />
          </Group>
          <Group $w={108}>
            <Button w={56} icon={<StudentIcon />} lines={['Students /', 'Seminars']} />
            <Button w={44} icon={<RelationsIcon />} lines={['Relations']} />
          </Group>
          <Group $w={156}>
            <Button w={46} icon={<TestIcon />} lines={['Test']} />
            <Button w={46} icon={<SirenIcon />} lines={['Generate', 'new']} />
            <Button w={60} icon={<TorchIcon />} lines={['Verification']} />
          </Group>
          <Group $w={50}>
            <Button w={46} icon={<BoardIcon />} lines={['School']} />
          </Group>
          <Group $w={108}>
            <Button w={104} icon={<HelpIcon />} lines={['Questions?', 'Comments? Write us']} />
          </Group>
          <Watermark>
            <WmBig>SOFTPEDIA</WmBig>
            <WmSmall>www.softpedia.com</WmSmall>
          </Watermark>
        </Ribbon>
        <Strip />
        <MainRow>
          <Timetable>
            <Corner />
            {DAYS.map((day) => (
              <DayHead key={day}>{day}</DayHead>
            ))}
            {PERIODS.map((kinds, d) =>
              kinds.split('').map((kind, i) => (
                <Chip key={`${d}-${i}`} $kind={kind} $end={i === 7}>
                  {i}
                </Chip>
              )),
            )}
            {ROWS.map((row) => (
              <React.Fragment key={row.name}>
                <ClassCell $mark={row.mark}>
                  {row.name}
                  {row.badge && <Badge>{row.badge}</Badge>}
                </ClassCell>
                {row.days.map((day, d) => (
                  <DayCells key={d} row={day} dayKey={`${row.name}-${d}`} />
                ))}
              </React.Fragment>
            ))}
          </Timetable>
          <Scroll>
            <ScrollBtn>
              <Chevron up />
            </ScrollBtn>
            <Thumb />
            <Grow />
            <ScrollBtn>
              <Chevron />
            </ScrollBtn>
          </Scroll>
        </MainRow>
        <Gap />
        <Tray>
          <Slate>
            <Legend>
              <LegendSwatch>En</LegendSwatch>
              <LegendLines>
                <LegendLine>
                  <MiniBook /> En - English language
                </LegendLine>
                <LegendLine>
                  <MiniStudent /> 7.D
                </LegendLine>
                <LegendLine>
                  <MiniCap /> Bc - Bacova
                </LegendLine>
                <LegendLine>
                  <MiniDesk /> 7.D
                </LegendLine>
              </LegendLines>
            </Legend>
          </Slate>
          <CardBox>
            <CardList>
              {CARDS.map((card, i) => (
                <Card key={i} $bg={card.bg} $wide={card.wide} $stack={card.stack} $align={card.align} $flat={card.flat}>
                  {card.label}
                </Card>
              ))}
            </CardList>
            <TabStrip>
              <StripTab $w={43}>
                <MiniBars />
              </StripTab>
              <StripTab $w={41}>
                <MiniStudent />
              </StripTab>
              <StripTab $w={39}>
                <MiniCap />
              </StripTab>
              <StripTab $w={38}>
                <MiniBook />
              </StripTab>
              <StripTab $w={37}>
                <MiniDesk />
              </StripTab>
            </TabStrip>
            <Sink>
              <SinkMark />
            </Sink>
          </CardBox>
        </Tray>
        <Sep />
        <Status>
          <StatusLeft>Ready</StatusLeft>
          <StatusRight>
            <StatusText $left={38} $w={25}>NUM</StatusText>
            <StatusText $left={44} $w={29}>100%</StatusText>
            <ZoomBtn>−</ZoomBtn>
            <Slider>
              <SliderTick />
              <SliderThumb>
                <SliderKnob />
              </SliderThumb>
            </Slider>
            <ZoomBtn>+</ZoomBtn>
            <Grip>
              <GripIcon />
            </Grip>
          </StatusRight>
        </Status>
      </Client>
    </Win>
  )
}

export default App
